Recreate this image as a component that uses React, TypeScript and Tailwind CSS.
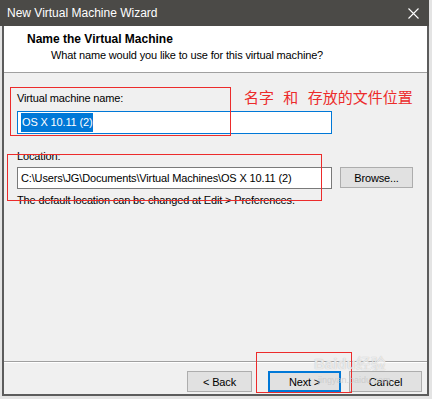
import React from "react";

export default function App() {
  return (
    <div className="relative w-[432px] h-[399px] overflow-hidden bg-[#e4e4e4] font-['Liberation_Sans',Arial,sans-serif] text-[11px] tracking-[-0.15px] leading-[16px] text-black">
      <div className="w-[429px] flex flex-col">
        {/* Title bar */}
        <div className="h-[26px] bg-[#4b4a47] flex items-center justify-between pl-[7px] pr-[10px] text-white text-[12px] tracking-normal">
          <span>New Virtual Machine Wizard</span>
          <svg width="11" height="11" viewBox="0 0 11 11" className="mt-[1px]">
            <path d="M0.5 0.5 L10.5 10.5 M10.5 0.5 L0.5 10.5" stroke="#ffffff" strokeWidth="1.1" fill="none" />
          </svg>
        </div>
        {/* Body */}
        <div className="ml-[2px] w-[427px] h-[370px] border-l-2 border-r-2 border-b-2 border-[#5c5c5c] bg-[#f0f0f0] flex flex-col">
          {/* Header */}
          <div className="h-[47px] bg-white border-b border-[#a0a0a0] pt-[5px]">
            <div className="pl-[23px] font-bold text-[12px] tracking-normal">Name the Virtual Machine</div>
            <div className="pl-[47px]">What name would you like to use for this virtual machine?</div>
          </div>
          {/* Content */}
          <div className="flex-1 flex flex-col pl-[13px] pt-[17px]">
            <div>Virtual machine name:</div>
            <div className="mt-[5px] w-[315px] h-[23px] border border-[#0078d7] bg-white flex items-center pl-[3px]">
              <span className="bg-[#0078d7] text-white h-[19px] leading-[19px] px-[1px] whitespace-nowrap">OS X 10.11 (2)</span>
            </div>
            <div className="mt-[14px]">Location:</div>
            <div className="mt-[3px] flex items-start gap-[8px]">
              <div className="w-[315px] h-[22px] border border-[#7a7a7a] bg-white flex items-center pl-[3px] whitespace-nowrap overflow-hidden">
                C:\Users\JG\Documents\Virtual Machines\OS X 10.11 (2)
              </div>
              <div className="w-[73px] h-[21px] border border-[#adadad] bg-[#e1e1e1] flex items-center justify-center">
                Browse...
              </div>
            </div>
            <div className="mt-[3px] whitespace-nowrap">The default location can be changed at Edit &gt; Preferences.</div>
          </div>
          {/* Footer */}
          <div className="h-[2px] border-t border-[#a0a0a0] border-b border-b-white" />
          <div className="h-[31px] pt-[8px] pr-[5px] flex justify-end items-start">
            <div className="w-[65px] h-[21px] border border-[#adadad] bg-[#e1e1e1] flex items-center justify-center">&lt; Back</div>
            <div className="ml-[16px] w-[73px] h-[21px] border-2 border-[#0078d7] bg-[#e1e1e1] flex items-center justify-center">Next &gt;</div>
            <div className="ml-[8px] w-[73px] h-[21px] border border-[#adadad] bg-[#e1e1e1] flex items-center justify-center">Cancel</div>
          </div>
        </div>
      </div>

      {/* Annotations (overlay) */}
      <div className="absolute left-[10px] top-[87px] w-[221px] h-[49px] border border-[#ec2b2b]" />
      <div className="absolute left-[7px] top-[154px] w-[315px] h-[47px] border border-[#ec2b2b]" />
      <div className="absolute left-[256px] top-[352px] w-[96px] h-[41px] border border-[#ec2b2b]" />
      <div className="absolute left-[244px] top-[87px] text-[15px] leading-[20px] tracking-normal [word-spacing:6px] text-[#ec2b2b] font-['Noto_Sans_CJK_SC',sans-serif] whitespace-pre">
        名字 和 存放的文件位置
      </div>

      {/* Watermark */}
      <div className="absolute left-[314px] top-[354px] text-[15px] leading-[18px] tracking-normal font-bold text-white/70 font-['Liberation_Sans',sans-serif] [text-shadow:0_0_1px_#b0b0b0]">
        Baidu<span className="font-['Noto_Sans_CJK_SC',sans-serif] font-normal">经验</span>
      </div>
      <div className="absolute left-[318px] top-[375px] text-[9px] leading-[10px] tracking-normal text-[#c8c8c8]/80 font-['Liberation_Sans',sans-serif]">
        jingyan.baidu.com
      </div>
    </div>
  );
}
